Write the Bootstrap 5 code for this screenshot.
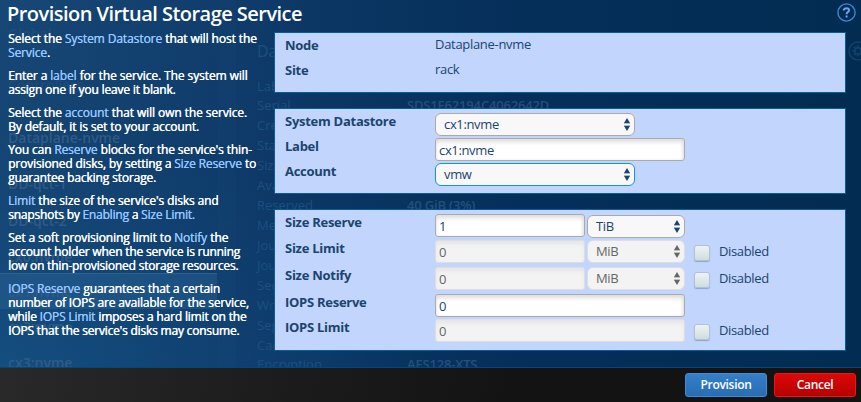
<!DOCTYPE html>
<html lang="en">
<head>
<meta charset="utf-8">
<meta name="viewport" content="width=device-width, initial-scale=1">
<title>Provision Virtual Storage Service</title>
<link href="https://cdn.jsdelivr.net/npm/bootstrap@5.3.0/dist/css/bootstrap.min.css" rel="stylesheet">
<style>
body{font-family:"Open Sans","Noto Sans",sans-serif;font-size:13px;background:#052c53;color:#1b446e}
.dialog-screen{width:861px;height:402px;background:radial-gradient(ellipse 330px 390px at 0 0,#1d507f66,#1d507f00),radial-gradient(ellipse 420px 240px at 0 370px,#175b9177,#175b9100),linear-gradient(90deg,#12416f 0,#0d3867 260px,#052f59 530px,#032c52 100%)}
.page-behind{z-index:0;height:367px;pointer-events:none}
.ghost{position:absolute;white-space:nowrap;line-height:20px;color:#1c4f80;font-size:13px}
.ghost.nav-name{left:8px;font-size:14px;font-weight:600;color:#305b87}
.ghost.field-name{left:257px}
.ghost.field-value{left:407px;font-weight:600;letter-spacing:-.18px;color:#23507c}
.ghost-row{position:absolute;left:0;top:273px;width:217px;height:36px;background:#2d669a66;border-top:1px solid #2d628f}
.ghost-divider{position:absolute;left:217px;top:0;width:19px;height:367px;background:#1e568018}
.ghost-gear{position:absolute;left:848px;top:41px}
.dialog-body{height:367px;z-index:1}
.dialog-title{height:28px;padding-left:7px;color:#fff;font-size:20px;font-weight:600;letter-spacing:-.53px;line-height:28px;margin:0}
.help-icon{margin:3px 5px 0 0}
.guide{width:274px;padding:4px 0 0 8px;color:#fff;font-size:12px;font-weight:500;line-height:14px;white-space:nowrap;text-shadow:.4px 0 #fff}
.guide p{margin:0 0 9px}
.term{color:#95c6ff;text-shadow:.2px 0 #95c6ff}
.t1{letter-spacing:-.09px}.t2{letter-spacing:-.12px}.t3{letter-spacing:-.14px}.t4{letter-spacing:-.17px}.t5{letter-spacing:-.2px}
.panels{width:572px;padding-top:4px;gap:15px}
.panel{background:#c2d5fc;border:1px solid #075d95;padding-left:10px}
.panel-node{height:61px}.panel-store{height:86px;padding-top:4px}.panel-size{height:142px;padding-top:4px}
.field{display:flex;height:25px;margin:0;line-height:25px}
.field.first{height:26px}
.field.tall{height:27px}
.field-label{width:150px;font-weight:700;letter-spacing:-.27px;line-height:17px}
.panel-node .field-label{line-height:25px}
.panel-node .field-text{line-height:23px;letter-spacing:-.3px}
.entry{height:23px;padding:0 3px;line-height:24px;border:1px solid #aaa;border-radius:3px;background:#fff;box-shadow:inset 0 3px 4px #ddd,inset -2px 0 3px #eee;color:#1b446e;font-size:13px;letter-spacing:-.35px}
.entry.wide{width:250px}.entry.short{width:150px;margin-right:2px}
.entry[readonly]{background:#f3f3f3;border-color:#dedede;color:#666;box-shadow:inset 0 3px 4px #e5e5e5}
.picker{display:flex;align-items:center;justify-content:space-between;width:200px;height:23px;padding:0 3px 0 8px;border:1px solid #aaa;border-radius:6px;background:#f8f8f8;color:#1b446e;line-height:21px;letter-spacing:-.35px}
.picker.unit{width:98px}
.first .picker{margin-top:1px}
.picker.focused{border-color:#128fff}
.picker.off{background:#f3f3f3;border-color:#dedede;color:#666}
.tick{width:16px;height:16px;margin:5px 9px 0 9px;border:1px solid #b0c2d8;border-radius:3px;background:linear-gradient(#eef3f4,#cfdddf);box-shadow:0 1px 1px #8da5c3}
.state{line-height:22px;letter-spacing:-.35px}
.dialog-foot{height:35px;border-top:1px solid #07457c;background:linear-gradient(100deg,#292929,#1b1b1b 35%,#131313 60%);padding:5px 5px 0;gap:7px}
.act{width:82px;height:24px;padding:0;border-radius:3px;color:#fff;font-size:12px;font-weight:600;line-height:22px;letter-spacing:-.3px}
.act-go{background:linear-gradient(#337fca,#296db3);border:1px solid #3e8dd6}
.act-stop{background:linear-gradient(#dc0808,#b80000);border:1px solid #e51919}
.act:hover{color:#fff}
</style>
<script src="https://cdn.jsdelivr.net/npm/bootstrap@5.3.0/dist/js/bootstrap.bundle.min.js"></script>
</head>
<body>
<svg class="d-none"><symbol id="arrows" viewBox="0 0 8 13"><path d="M4 0 7 5H1zM4 13 1 8h6z" fill="currentColor"/><path d="M1 5.5h6M1 7.5h6" stroke="currentColor" stroke-opacity=".35"/></symbol></svg>
<div class="dialog-screen position-relative overflow-hidden">
  <div class="page-behind position-absolute top-0 start-0 w-100 overflow-hidden" aria-hidden="true">
    <div class="ghost-divider"></div><div class="ghost-row"></div>
    <span class="ghost nav-name" style="top:24px;opacity:.35">Global</span>
    <span class="ghost nav-name" style="top:75px;opacity:.35">Controllers</span>
    <span class="ghost nav-name" style="top:128px">Dataplane-nvme</span>
    <span class="ghost nav-name" style="top:174px">DD-qct-1</span>
    <span class="ghost nav-name" style="top:211px">DD-qct-2</span>
    <span class="ghost nav-name" style="top:247px">cx0:nvme</span>
    <span class="ghost nav-name" style="top:282px">cx1:nvme</span>
    <span class="ghost nav-name" style="top:317px">cx2:nvme</span>
    <span class="ghost nav-name" style="top:353px">cx3:nvme</span>
    <span class="ghost field-name fs-6" style="top:41px">Data</span>
    <span class="ghost field-name" style="top:76px">Label</span>
    <span class="ghost field-name" style="top:95px">Serial</span>
    <span class="ghost field-name" style="top:115px">Created</span>
    <span class="ghost field-name" style="top:135px">State</span>
    <span class="ghost field-name" style="top:155px">Size</span>
    <span class="ghost field-name" style="top:175px">Available</span>
    <span class="ghost field-name" style="top:195px">Reserved</span>
    <span class="ghost field-name" style="top:215px">Metadata</span>
    <span class="ghost field-name" style="top:235px">Journal</span>
    <span class="ghost field-name" style="top:255px">Journal</span>
    <span class="ghost field-name" style="top:275px">Sectors</span>
    <span class="ghost field-name" style="top:295px">Writes</span>
    <span class="ghost field-name" style="top:315px">Segments</span>
    <span class="ghost field-name" style="top:335px">Cache</span>
    <span class="ghost field-name" style="top:354px">Encryption</span>
    <span class="ghost field-value" style="top:95px">SDS1E62194C4062642D</span>
    <span class="ghost field-value" style="top:195px">40 GiB (3%)</span>
    <span class="ghost field-value" style="top:354px">AES128-XTS</span>
    <svg class="ghost-gear" width="20" height="20" viewBox="0 0 20 20" fill="none" stroke="#11406b"><circle cx="10" cy="10" r="9" stroke-width="1.5"/><circle cx="10" cy="10" r="3.2" stroke-width="1.8"/><path d="M10 4.5v2M10 13.5v2M4.5 10h2M13.5 10h2M6 6l1.5 1.5M12.5 12.5 14 14M6 14l1.5-1.5M12.5 7.5 14 6" stroke-width="1.8"/></svg>
  </div>
  <main class="dialog-body position-relative">
    <header class="d-flex justify-content-between">
      <h1 class="dialog-title">Provision Virtual Storage Service</h1>
      <svg class="help-icon" width="19" height="19" viewBox="0 0 19 19" fill="none" stroke="#4288d4"><circle cx="9.5" cy="9.5" r="8.6" stroke-width="1.4"/><path d="M6.8 7.6V6.7Q7.2 5.2 9.5 5.2q2.5 0 2.5 2 0 1.3-1.3 2-1.1.6-1.1 2M9.6 12.4v2" stroke="#65a6ef" stroke-width="2"/></svg>
    </header>
    <div class="d-flex">
      <aside class="guide flex-shrink-0">
        <p><span class="t1">Select the <span class="term">System Datastore</span> that will host the</span><br><span class="t2"><span class="term">Service</span>.</span></p>
        <p><span class="t1">Enter a <span class="term">label</span> for the service. The system will</span><br><span class="t4">assign one if you leave it blank.</span></p>
        <p><span class="t1">Select the <span class="term">account</span> that will own the service.</span><br><span class="t2">By default, it is set to your account.</span></p>
        <p><span class="t3">You can <span class="term">Reserve</span> blocks for the service's thin-</span><br><span class="t3">provisioned disks, by setting a <span class="term">Size Reserve</span> to</span><br><span class="t3">guarantee backing storage.</span></p>
        <p><span class="t2"><span class="term">Limit</span> the size of the service's disks and</span><br><span class="t5">snapshots by <span class="term">Enabling</span> a <span class="term">Size Limit.</span></span></p>
        <p><span class="t1">Set a soft provisioning limit to <span class="term">Notify</span> the</span><br><span class="t5">account holder when the service is running</span><br><span class="t5">low on thin-provisioned storage resources.</span></p>
        <p><span class="t3"><span class="term">IOPS Reserve</span> guarantees that a certain</span><br><span class="t4">number of IOPS are available for the service,</span><br><span class="t4">while <span class="term">IOPS Limit</span> imposes a hard limit on the</span><br><span class="t5">IOPS that the service's disks may consume.</span></p>
      </aside>
      <section class="panels d-flex flex-column flex-shrink-0">
        <div class="panel panel-node">
          <div class="field"><div class="field-label">Node</div><div class="field-text">Dataplane-nvme</div></div>
          <div class="field"><div class="field-label">Site</div><div class="field-text">rack</div></div>
        </div>
        <div class="panel panel-store">
          <div class="field"><div class="field-label">System Datastore</div><div class="picker">cx1:nvme<svg width="8" height="13"><use href="#arrows"/></svg></div></div>
          <div class="field"><label class="field-label" for="label">Label</label><input class="entry wide" id="label" value="cx1:nvme"></div>
          <div class="field"><div class="field-label">Account</div><div class="picker focused">vmw<svg width="8" height="13"><use href="#arrows"/></svg></div></div>
        </div>
        <div class="panel panel-size">
          <div class="field first"><label class="field-label" for="reserve">Size Reserve</label><input class="entry short" id="reserve" value="1"><div class="picker unit">TiB<svg width="8" height="13"><use href="#arrows"/></svg></div></div>
          <div class="field tall"><label class="field-label" for="limit">Size Limit</label><input class="entry short" id="limit" value="0" readonly><div class="picker unit off">MiB<svg width="8" height="13"><use href="#arrows"/></svg></div><span class="tick"></span><span class="state">Disabled</span></div>
          <div class="field tall"><label class="field-label" for="notify">Size Notify</label><input class="entry short" id="notify" value="0" readonly><div class="picker unit off">MiB<svg width="8" height="13"><use href="#arrows"/></svg></div><span class="tick"></span><span class="state">Disabled</span></div>
          <div class="field"><label class="field-label" for="iops">IOPS Reserve</label><input class="entry wide" id="iops" value="0"></div>
          <div class="field"><label class="field-label" for="iopslimit">IOPS Limit</label><input class="entry wide" id="iopslimit" value="0" readonly><span class="tick"></span><span class="state">Disabled</span></div>
        </div>
      </section>
    </div>
  </main>
  <footer class="dialog-foot position-relative d-flex justify-content-end">
    <button class="btn act act-go" type="button">Provision</button>
    <button class="btn act act-stop" type="button">Cancel</button>
  </footer>
</div>
</body>
</html>
